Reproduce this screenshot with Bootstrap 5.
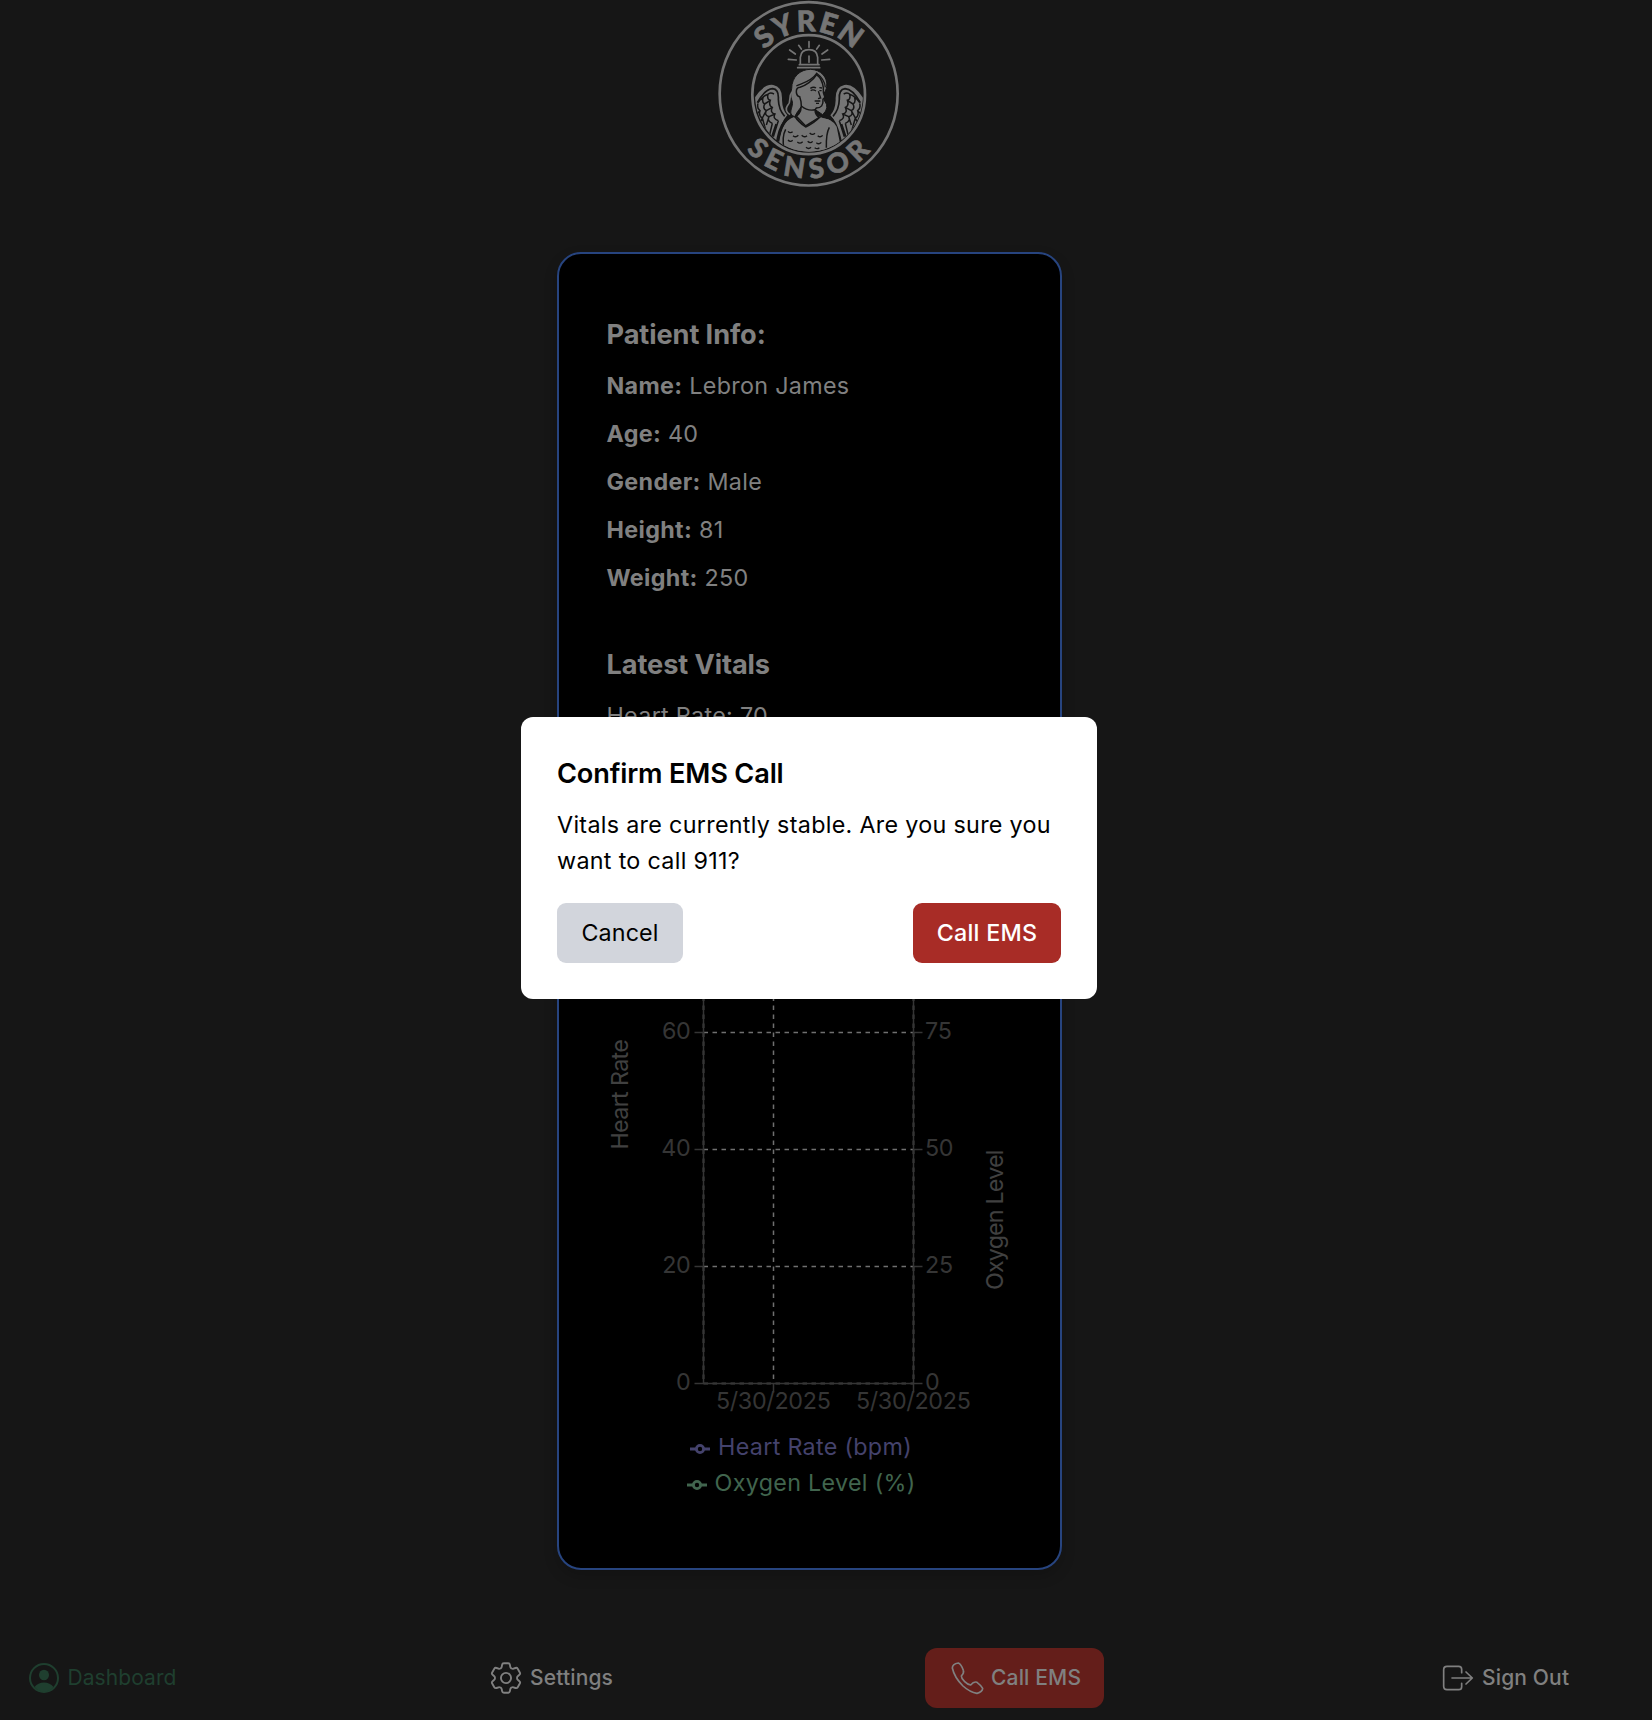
<!DOCTYPE html>
<html lang="en">
<head>
<meta charset="utf-8">
<meta name="viewport" content="width=device-width, initial-scale=1">
<title>Syren Sensor</title>
<link rel="stylesheet" href="https://cdn.jsdelivr.net/npm/bootstrap@5.3.0/dist/css/bootstrap.min.css">
<style>
body{background:#161616;color:#808080;font-family:Inter,"Liberation Sans",sans-serif;font-size:23.3px;line-height:36px;letter-spacing:.31px;height:1720px;overflow:hidden}
.page-shell{width:1618px;height:1720px}
.brand-box{height:252px}
.brand-box svg{margin-left:2px}
.vitals-card{width:505px;height:1318px;background:#000;border:2px solid #27447f;border-radius:24px;padding:60px 46px 0 48px;box-shadow:0 6px 14px rgba(0,0,0,.18)}
.section-title{font-size:27.2px;line-height:42px;font-weight:700;margin:0 0 12px;letter-spacing:-.1px}
.info-line{margin:0 0 12px}
.info-line b{font-weight:700;letter-spacing:.35px}
.chart-box{margin:0 -10px 0 -9px;padding-top:133px}
.chart-box text{font-family:Inter,sans-serif;font-size:23.3px;letter-spacing:-.3px}
.chart-box .axis-name{letter-spacing:-.35px}
.legend-row{height:36px;padding-right:18px}
.legend-row svg{margin-top:3px}
.hr-color{color:#44426c}.ox-color{color:#41654e}
.bottom-nav{display:grid;grid-template-columns:461px 461px 491px auto;height:60px;margin-top:78px;margin-left:3px;font-size:21px;letter-spacing:.15px}
.nav-cell{display:flex;align-items:center;height:60px;padding:0 24px;font-weight:500;gap:6px;white-space:nowrap}
.nav-cell svg{flex:none}
.nav-call{background:#641e1a;border-radius:12px;width:179px}
.nav-active{color:#1f3f2f;font-weight:400;letter-spacing:.08px;padding-left:22.5px}
.dim-layer{width:1618px;height:1716px}
.confirm-box{width:576px;height:282px;background:#fff;border-radius:12px;padding:36px;color:#000}
.confirm-box .section-title{font-weight:600;letter-spacing:-.18px}
.btn-ems{height:60px;border:0;border-radius:9px;font-size:23.3px;padding:0;letter-spacing:.1px;line-height:36px}
.btn-cancel{width:126px;background:#d2d5dc;color:#000}
.btn-call{width:148px;background:#a82c26;color:#fff;font-weight:500;letter-spacing:.25px}
</style>
<script src="https://cdn.jsdelivr.net/npm/bootstrap@5.3.0/dist/js/bootstrap.bundle.min.js"></script>
</head>
<body>
<div class="page-shell d-flex flex-column align-items-center">
  <header class="brand-box">
    <svg width="220" height="200" viewBox="0 0 660 600" fill="none" stroke="#757575" class="d-block">
      <defs>
        <path id="arcTop" d="M139 284 A188 190 0 0 1 515 284"/>
        <path id="arcLow" d="M76 281 A251 254 0 0 0 578 281"/>
        <clipPath id="medal"><ellipse cx="327" cy="284" rx="162" ry="171"/></clipPath>
      </defs>
      <ellipse cx="326" cy="281.500" rx="267" ry="275" stroke-width="8"/>
      <ellipse cx="326" cy="284" rx="169" ry="178.500" stroke-width="8"/>
      <g fill="#757575" stroke-width="2" font-family="Lato,sans-serif" font-weight="900" font-size="87" text-anchor="middle">
        <text letter-spacing="5"><textPath href="#arcTop" startOffset="50.300%">SYREN</textPath></text>
        <text letter-spacing="20" font-size="82"><textPath href="#arcLow" startOffset="51%">SENSOR</textPath></text>
      </g>
      <g stroke-width="5" stroke-linecap="round">
        <path d="M301 194V172Q303 149 327 149T353 172V194M298 194H357M293 203H359M327 168V187"/>
        <path d="M327 125V142M296 136L304 147M269 150L286 162M265 178L289 180M358 136L350 147M383 150L366 162M389 178L365 180"/>
      </g>
      <g clip-path="url(#medal)">
        <g id="wing">
          <path d="M160 300Q190 250 220 255Q248 260 246 300Q247 330 262 346Q240 366 236 420H150Z" fill="#757575" stroke="none"/>
          <path d="M172 308Q195 267 218 266Q237 268 235 298Q236 330 254 349" stroke="#161616" stroke-width="5"/>
          <path d="M174 308Q188 288 204 283Q200 298 211 301Q205 317 217 322Q209 338 225 342Q217 356 235 362M204 283Q210 276 222 282M190 290Q184 306 194 312Q187 326 199 332Q192 346 207 350Q200 362 217 370M174 310Q170 326 180 332Q175 348 187 354M211 301L194 312M217 322L199 332M225 342L207 350M187 354L200 400M207 350L199 375M217 370L208 408M235 362L220 410M180 332L162 350M199 332L187 354M187 354L176 376M228 372L212 420" stroke="#161616" stroke-width="4.500"/>
        </g>
        <use href="#wing" transform="translate(653 0) scale(-1 1)"/>
        <path d="M229 460Q236 357 279 350Q290 347 296 340L360 343Q373 354 386 353Q412 362 427 460Z" fill="#757575" stroke="#161616" stroke-width="10"/>
        <path d="M236 460Q240 363 282 351L317 382L358 353Q397 354 410 380L426 460Z" fill="#757575" stroke="none"/>
        <path d="M252 448Q245 410 257 388M379 443Q378 400 388 382M284 348Q295 366 317 381Q342 370 362 349" stroke="#161616" stroke-width="4.500"/>
        <path d="M264 394q6 7 14 1M279 407q8 7 16-1M305 406q8 8 16 1M329 399q8 8 16 1M353 407q8 7 15-1M264 420q7 8 14 1M292 426q8 7 16-1M323 424q8 8 15 0M349 428q8 7 15-1M318 442q8 7 15 0M344 443q8 6 14 0" stroke="#161616" stroke-width="4"/>
        <path d="M284 350C260 342 281 322 277 304C274 296 269 287 275 266C275 231 300 208 332 208C362 209 384 231 380 260C378 277 365 280 374 303Q390 323 368 344L340 325L304 320Q292 334 284 350Z" fill="#757575" stroke="#161616" stroke-width="3"/>
        <path d="M276 276C263 292 276 304 263 316Q252 332 270 344" stroke="#757575" stroke-width="5"/>
        <path d="M299 290C287 288 284 263 300 262C316 257 339 242 350 224Q367 237 370 263Q368 278 375 292L369 298Q371 324 349 324L345 330Q346 346 358 352L317 378L289 349Q308 335 303 305Z" fill="#757575" stroke="#161616" stroke-width="4.500"/>
        <path d="M304 318Q324 335 346 329M331 265Q341 259 348 264M358 263L366 264M332 272Q339 267 348 273M358 272H365M355 274L362 294L354 296M344 303H361M348 310H357" stroke="#161616" stroke-width="4"/>
        <path d="M289 258C305 250 335 244 350 220Q374 238 376 262" stroke="#161616" stroke-width="4"/>
      </g>
    </svg>
  </header>

  <main class="vitals-card">
    <h3 class="section-title">Patient Info:</h3>
    <p class="info-line"><b>Name:</b> Lebron James</p>
    <p class="info-line"><b>Age:</b> 40</p>
    <p class="info-line"><b>Gender:</b> Male</p>
    <p class="info-line"><b>Height:</b> 81</p>
    <p class="info-line mb-5"><b>Weight:</b> 250</p>
    <h3 class="section-title">Latest Vitals</h3>
    <p class="info-line">Heart Rate: 70</p>
    <div class="chart-box">
      <!-- time series grid with a heart rate axis and an oxygen axis -->
      <svg class="d-block" width="428" height="550" viewBox="598 879 428 550" fill="none">
        <g stroke="#707070" stroke-width="1.500" stroke-dasharray="4.500 4.500">
          <path d="M703.500 1032.500H913.500M703.500 1149.500H913.500M703.500 1266.500H913.500M773.500 915.500V1383.500"/>
          <path d="M703.500 1383.500H913.500M703.500 915.500V1383.500M913.500 915.500V1383.500" stroke="#444" stroke-width="2"/>
        </g>
        <path d="M703.500 915.500V1383.500H913.500V915.500M694.500 1032.500H703.500M694.500 1149.500H703.500M694.500 1266.500H703.500M694.500 1383.500H703.500M913.500 1032.500H922.500M913.500 1149.500H922.500M913.500 1266.500H922.500M913.500 1383.500H922.500M773.500 1383.500V1392.500M913.500 1383.500V1392.500" stroke="#353535" stroke-width="1.500"/>
        <g fill="#353535" text-anchor="end">
          <text x="690.500" y="1039">60</text><text x="690.500" y="1156">40</text><text x="690.500" y="1273">20</text><text x="690.500" y="1390">0</text>
        </g>
        <g fill="#353535">
          <text x="925" y="1039">75</text><text x="925" y="1156">50</text><text x="925" y="1273">25</text><text x="925" y="1390">0</text>
        </g>
        <g fill="#353535" text-anchor="middle">
          <text x="773.200" y="1409">5/30/2025</text><text x="913.200" y="1409">5/30/2025</text>
        </g>
        <g fill="#404040">
          <text class="axis-name" transform="translate(627.500 1149.500) rotate(-90)" textLength="110">Heart Rate</text>
          <text class="axis-name" transform="translate(1002.500 1290) rotate(-90)" textLength="140">Oxygen Level</text>
        </g>
      </svg>
    </div>
    <div class="legend-row hr-color d-flex align-items-center justify-content-center gap-2">
      <svg width="20" height="12" viewBox="0 0 20 12" fill="none" stroke="currentColor" stroke-width="2.800"><path d="M0 6H6M14 6H20"/><circle cx="10" cy="6" r="3.600"/></svg><span>Heart Rate (bpm)</span>
    </div>
    <div class="legend-row ox-color d-flex align-items-center justify-content-center gap-2">
      <svg width="20" height="12" viewBox="0 0 20 12" fill="none" stroke="currentColor" stroke-width="2.800"><path d="M0 6H6M14 6H20"/><circle cx="10" cy="6" r="3.600"/></svg><span>Oxygen Level (%)</span>
    </div>
  </main>

  <nav class="bottom-nav align-self-stretch">
    <div class="nav-cell nav-active">
      <svg width="36" height="36" viewBox="0 0 36 36"><circle cx="18" cy="18" r="14" fill="none" stroke="currentColor" stroke-width="2"/><ellipse cx="18" cy="15" rx="5" ry="5.300" fill="currentColor"/><path d="M8.500 27Q12 22.500 18 22.500T27.500 27Q24 31.500 18 31.500T8.500 27Z" fill="currentColor"/></svg>
      <span>Dashboard</span>
    </div>
    <div class="nav-cell">
      <svg width="36" height="36" viewBox="1 1 22 22" fill="none" stroke="currentColor" stroke-width="1.150" stroke-linejoin="round"><path d="M9.594 3.940c.090-.542.560-.940 1.110-.940h2.593c.550 0 1.020.398 1.110.940l.213 1.281c.063.374.313.686.645.870.074.040.147.083.220.127.325.196.720.257 1.075.124l1.217-.456a1.125 1.125 0 0 1 1.370.490l1.296 2.247a1.125 1.125 0 0 1-.260 1.431l-1.003.827c-.293.241-.438.613-.430.992a7.723 7.723 0 0 1 0 .255c-.008.378.137.750.430.991l1.004.827c.424.350.534.955.260 1.430l-1.298 2.247a1.125 1.125 0 0 1-1.369.491l-1.217-.456c-.355-.133-.750-.072-1.076.124a6.470 6.470 0 0 1-.220.128c-.331.183-.581.495-.644.869l-.213 1.281c-.090.543-.560.940-1.110.940h-2.594c-.550 0-1.019-.398-1.110-.940l-.213-1.281c-.062-.374-.312-.686-.644-.870a6.520 6.520 0 0 1-.220-.127c-.325-.196-.720-.257-1.076-.124l-1.217.456a1.125 1.125 0 0 1-1.369-.490l-1.297-2.247a1.125 1.125 0 0 1 .260-1.431l1.004-.827c.292-.240.437-.613.430-.991a6.932 6.932 0 0 1 0-.255c.007-.380-.138-.751-.430-.992l-1.004-.827a1.125 1.125 0 0 1-.260-1.430l1.297-2.247a1.125 1.125 0 0 1 1.370-.491l1.216.456c.356.133.751.072 1.076-.124.072-.044.146-.086.220-.128.332-.183.582-.495.644-.869l.214-1.280Z"/><circle cx="12" cy="12" r="3.100"/></svg>
      <span>Settings</span>
    </div>
    <div class="nav-cell nav-call">
      <svg width="36" height="36" viewBox="88 60 108 108" fill="none" stroke="currentColor" stroke-width="5" stroke-linejoin="round"><path d="M116 69Q98 72 98 84Q104 112 130 138Q151 157 172 160Q188 156 189 145Q184 136 172 127Q163 123 153 135Q143 133 135 125Q125 116 125 108Q134 99 131 91Q125 73 116 69Z"/></svg>
      <span>Call EMS</span>
    </div>
    <div class="nav-cell">
      <svg width="36" height="36" viewBox="30 30 108 108" fill="none" stroke="currentColor" stroke-width="5" stroke-linecap="round" stroke-linejoin="round"><path d="M95 68V58Q95 49 86 49H51Q41 49 41 59V109Q41 119 51 119H86Q95 119 95 110V100M66 84H127M108 66L127 84L108 102"/></svg>
      <span>Sign Out</span>
    </div>
  </nav>
</div>

<div class="dim-layer position-absolute top-0 start-0 d-flex align-items-center justify-content-center">
  <section class="confirm-box" role="dialog">
    <h3 class="section-title">Confirm EMS Call</h3>
    <p class="mb-4">Vitals are currently stable. Are you sure you want to call 911?</p>
    <div class="d-flex justify-content-between">
      <button class="btn btn-ems btn-cancel">Cancel</button>
      <button class="btn btn-ems btn-call">Call EMS</button>
    </div>
  </section>
</div>
</body>
</html>
